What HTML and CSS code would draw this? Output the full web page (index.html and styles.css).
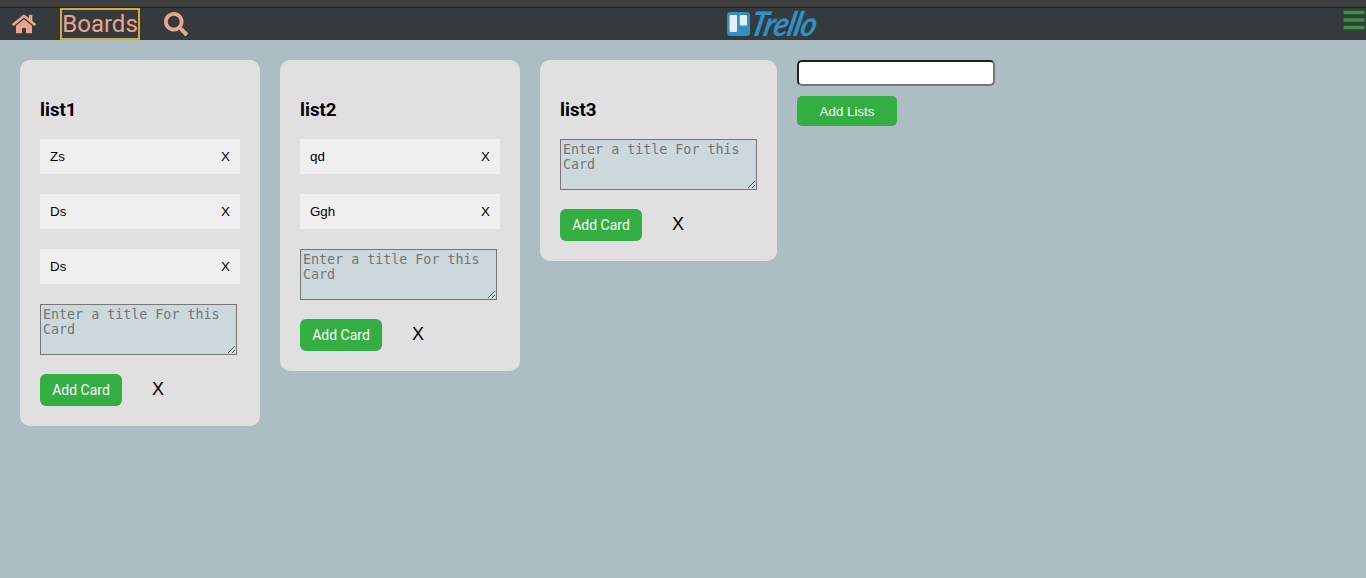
FILE: index.html
```html
<!DOCTYPE html>
<html lang="en">
<head>
<meta charset="utf-8">
<title>Boards</title>
<link rel="stylesheet" href="styles.css">
</head>
<body>
<header class="navbar">
  <nav class="nav-links">
    <a class="home" aria-label="Home"><svg viewBox="0 0 576 512" width="24" height="22"><path d="M280 148 96 300v164a16 16 0 0 0 16 16h112a16 16 0 0 0 16-16v-96a16 16 0 0 1 16-16h64a16 16 0 0 1 16 16v96a16 16 0 0 0 16 16h112a16 16 0 0 0 16-16V300L296 148a12 12 0 0 0-16 0zM572 251l-84-69V44a12 12 0 0 0-12-12h-56a12 12 0 0 0-12 12v73l-90-74a48 48 0 0 0-61 0L4 251a12 12 0 0 0-1 17l25 31a12 12 0 0 0 17 2l235-194a12 12 0 0 1 16 0l235 194a12 12 0 0 0 17-2l25-31a12 12 0 0 0-1-17z"/></svg></a>
    <a class="boards">Boards</a>
    <a class="search" aria-label="Search"><svg viewBox="0 0 512 512" width="24" height="24"><path fill-rule="evenodd" d="M505 443 405 343c-4-4-11-7-17-7h-16a208 208 0 1 0-36 36v16c0 7 3 13 7 17l100 100c9 9 24 9 34 0l28-28c9-10 9-25 0-34zM208 336a128 128 0 1 1 0-256 128 128 0 0 1 0 256z"/></svg></a>
  </nav>
  <div class="logo">
    <svg viewBox="0 0 23 24" width="23" height="24"><rect width="23" height="24" rx="3" fill="#318fc5"/><rect x="2.5" y="3" width="7.5" height="17" rx="1" fill="#e8eef2"/><rect x="12.8" y="3" width="7.2" height="10.5" rx="1" fill="#e8eef2"/></svg>
    <span class="wordmark">Trello</span>
  </div>
  <svg class="menu" viewBox="0 0 22 20" width="22" height="20"><path d="M.5.7h21v3.6H.5zM.5 8.2h21v3.6H.5zM.5 15.7h21v3.6H.5z"/></svg>
</header>
<main class="board">
  <section class="list">
    <h3>list1</h3>
    <div class="card"><span>Zs</span><span>X</span></div>
    <div class="card"><span>Ds</span><span>X</span></div>
    <div class="card"><span>Ds</span><span>X</span></div>
    <textarea placeholder="Enter a title For this Card"></textarea>
    <div class="actions"><button class="add-card">Add Card</button><span class="close">X</span></div>
  </section>
  <section class="list">
    <h3>list2</h3>
    <div class="card"><span>qd</span><span>X</span></div>
    <div class="card"><span>Ggh</span><span>X</span></div>
    <textarea placeholder="Enter a title For this Card"></textarea>
    <div class="actions"><button class="add-card">Add Card</button><span class="close">X</span></div>
  </section>
  <section class="list empty">
    <h3>list3</h3>
    <textarea placeholder="Enter a title For this Card"></textarea>
    <div class="actions"><button class="add-card">Add Card</button><span class="close">X</span></div>
  </section>
  <form class="new-list">
    <input type="text" aria-label="List name">
    <button type="button">Add Lists</button>
  </form>
</main>
</body>
</html>
```
FILE: styles.css
```css
* { box-sizing: border-box; }
body { margin: 0; min-height: 100vh; background: #adbdc4; font-family: Roboto, sans-serif; color: #000; }
.navbar { height: 40px; display: flex; justify-content: space-between; border-top: 7px solid #3f3f3f; background: #353a3d; box-shadow: inset 0 1px #202224; }
.nav-links { flex: 1; display: flex; align-items: flex-start; color: #e9a58f; fill: #e9a58f; }
.nav-links svg { display: block; }
.home { margin: 6px 24px 0 12px; }
.boards { width: 80px; height: 32px; margin-top: 1px; border: 2px solid #d4a840; font-size: 24px; line-height: 28px; text-align: center; white-space: nowrap; }
.search { margin: 5px 0 0 24px; }
.logo { display: flex; margin-top: 5px; width: 96px; gap: 1px; }
.logo svg { flex: none; }
.wordmark { color: #318fc5; font: italic bold 34px/21px Lato, sans-serif; letter-spacing: -1px; transform: scaleX(.9) skewX(-14deg); transform-origin: left center; }
.menu { flex: none; margin: 3px 1px 0 520px; fill: #36963b; }
.board { display: flex; align-items: flex-start; gap: 20px; padding: 20px; }
.list { flex: none; width: 240px; padding: 20px; border-radius: 10px; background: #e0e0e0; }
.empty { width: 237px; }
h3 { margin: 19px 0 18px; font-size: 18.72px; line-height: 22px; }
.card { display: flex; justify-content: space-between; align-items: center; height: 35px; padding: 0 10px; margin-bottom: 20px; background: #efefef; font: 13.333px "Liberation Sans", sans-serif; }
textarea { display: block; width: 197px; height: 51px; margin: 0 0 19px; padding: 2px; border: 1px solid #767676; border-radius: 0; background: #ccd8dc; font: 13.333px/15px "DejaVu Sans Mono", monospace; }
textarea::placeholder { color: #757575; }
.actions { display: flex; gap: 30px; }
button { border: 0; padding: 0; border-radius: 5px; background: #32ae43; color: #fff; }
.add-card { width: 82px; height: 32px; border-radius: 6px; font: 14px Roboto, sans-serif; }
.close { font: 18px/30px "Liberation Sans", sans-serif; }
.new-list { display: flex; flex-direction: column; gap: 10px; }
.new-list input { width: 198px; height: 26px; border: 2px inset #767676; border-radius: 5px; background: #fff; }
.new-list button { width: 100px; height: 30px; font: 13.333px "Liberation Sans", sans-serif; }
```
